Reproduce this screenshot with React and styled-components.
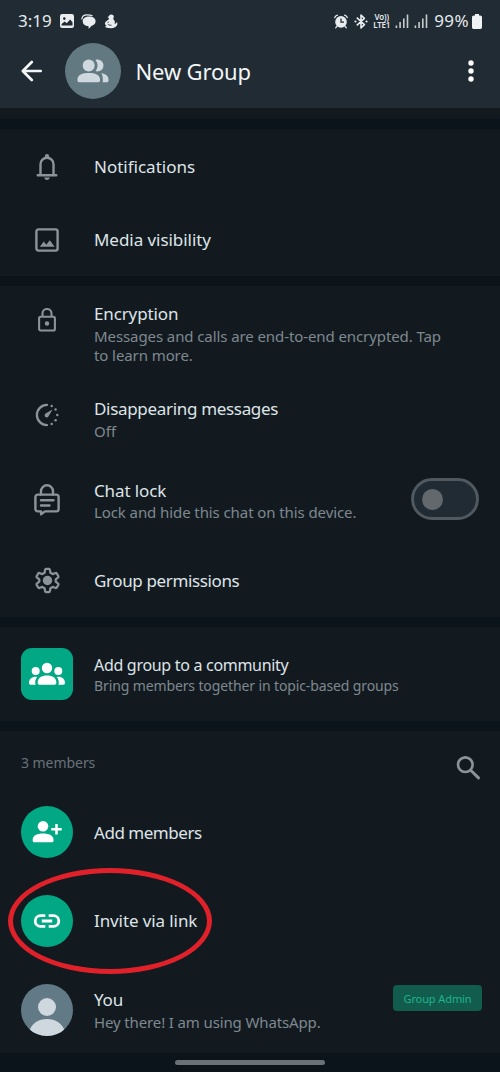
import React from 'react';
import styled, { createGlobalStyle } from 'styled-components';

const GlobalStyle = createGlobalStyle`
  * {
    box-sizing: border-box;
  }

  body {
    margin: 0;
    background-color: #0b141a;
    font-family: 'Noto Sans', 'Open Sans', sans-serif;
  }

  svg {
    display: block;
    flex: none;
  }
`

const Screen = styled.div`
  width: 500px;
  height: 1072px;
  display: flex;
  flex-direction: column;
  overflow: hidden;
  background-color: #0b141a;
`

const Header = styled.header`
  height: 108px;
  flex: none;
  background-color: #202b33;
`

const StatusBar = styled.div`
  height: 42px;
  padding: 0 18px;
  display: flex;
  align-items: center;
  justify-content: space-between;
  color: #e6eaec;

  .side {
    display: flex;
    align-items: center;
  }
`

const StatusText = styled.span`
  margin-left: ${props => props.$left || 0}px;
  font-size: 17px;
  line-height: 22px;
  letter-spacing: ${props => props.$spacing || 0}px;
  white-space: nowrap;
`

const Network = styled.div`
  margin-left: 4px;
  width: 19px;
  text-align: center;
  white-space: pre;
  font-size: 8px;
  font-weight: 600;
  line-height: 8px;
  letter-spacing: -0.2px;
`

const Toolbar = styled.div`
  height: 58px;
  padding: 0 19px 0 20px;
  display: flex;
  align-items: center;
  color: #f3f6f7;

  h1 {
    flex: 1;
    margin: 0 0 0 15px;
    font-size: 22px;
    font-weight: 400;
    line-height: 30px;
    letter-spacing: -0.15px;
  }
`

const Avatar = styled.div`
  width: ${props => props.$size}px;
  height: ${props => props.$size}px;
  flex: none;
  margin-left: ${props => props.$left || 0}px;
  display: flex;
  align-items: center;
  justify-content: center;
  overflow: hidden;
  border-radius: ${props => props.$radius || '50%'};
  background-color: ${props => props.$color || '#02a884'};
`

const Section = styled.section`
  height: ${props => props.$height}px;
  flex: none;
  margin-bottom: ${props => props.$gap ?? 10}px;
  background-color: #121a20;
`

const Row = styled.div`
  position: relative;
  height: ${props => props.$height}px;
  padding: ${props => props.$top || 0}px 18px 0 21px;
  display: flex;
  align-items: ${props => (props.$top ? 'flex-start' : 'center')};
`

const IconSlot = styled.div`
  width: 52px;
  flex: none;
  display: flex;
  justify-content: center;
  margin-top: ${props => props.$top || 0}px;
  color: #8b9499;
`

const Texts = styled.div`
  flex: 1;
  min-width: 0;
  margin-left: 21px;
  padding-top: ${props => props.$top || 0}px;
`

const Title = styled.div`
  font-size: ${props => props.$size || 17}px;
  line-height: 22px;
  letter-spacing: ${props => props.$spacing || 0}px;
  white-space: nowrap;
  color: #dfe4e8;
`

const Sub = styled.div`
  margin-top: ${props => props.$gap ?? 1}px;
  font-size: ${props => props.$size || 15}px;
  line-height: 19px;
  letter-spacing: ${props => props.$spacing || 0}px;
  white-space: pre;
  color: #7f888f;
`

const Switch = styled.div`
  width: 68px;
  height: 42px;
  flex: none;
  margin: -2px 3px 0 0;
  padding-left: 8px;
  display: flex;
  align-items: center;
  border: 3px solid #50595f;
  border-radius: 21px;
  background-color: #202b33;

  &::before {
    content: '';
    width: 21px;
    height: 21px;
    border-radius: 50%;
    background-color: #62686c;
  }
`

const MembersHead = styled.div`
  height: 57px;
  padding: 7px 19px 0 21px;
  display: flex;
  align-items: center;
  justify-content: space-between;
  color: #8b9499;

  span {
    font-size: 14px;
    line-height: 20px;
    letter-spacing: -0.05px;
    color: #69737a;
  }

  svg {
    margin-top: 9px;
  }
`

const Badge = styled.div`
  width: 89px;
  height: 26px;
  flex: none;
  align-self: flex-start;
  margin-top: 20px;
  border-radius: 4px;
  text-align: center;
  font-size: 11px;
  line-height: 27px;
  letter-spacing: -0.1px;
  white-space: nowrap;
  color: #20b38c;
  background-color: #115c4d;
`

const Highlight = styled.div`
  position: absolute;
  left: 8px;
  top: -8px;
  width: 204px;
  height: 106px;
  border: 5px solid #e0212a;
  border-radius: 50%;
`

const NavBar = styled.div`
  flex: 1;
  display: flex;
  justify-content: center;
  padding-top: 7px;

  &::before {
    content: '';
    width: 150px;
    height: 5px;
    border-radius: 3px;
    background-color: #6a7277;
  }
`

const PictureIcon = () => (
  <svg width="22" height="14" viewBox="-8 0 22 14">
    <rect width="14" height="14" rx="2.2" fill="#e9edef" />
    <circle cx="4.3" cy="4.6" r="1.3" fill="#202b33" />
    <path d="M1.6 11.6V10l3-2.6 2.2 1.8 3.3-3.6 2.4 2.6v3.4z" fill="#202b33" />
  </svg>
)

const ChatIcon = () => (
  <svg width="22" height="15" viewBox="-7 0 22 15">
    <path d="M.8 5.500C.9 2.500 2.800.9 6 .9c2.500 0 4 .2 5.500.9" fill="none" stroke="#e9edef" strokeWidth="1.200" />
    <path d="M8.300 2.600c3.700 0 6.300 1.800 6.300 4.600 0 2.500-1.800 4.100-4.300 4.700-.7 1.100-1.700 2.100-2.800 2.600l.1-2.300C4 12 1.700 10 1.700 7.200c0-2.800 2.700-4.600 6.600-4.600z" fill="#e9edef" />
  </svg>
)

const DuckIcon = () => (
  <svg width="22" height="15" viewBox="-8 0 22 15">
    <path d="M7.200.4c1.900 0 2.900 1.200 2.600 2.700-.2 1-.8 1.500-.4 2.200.5.900 1.500 1.300 1.500 2.900 0 .8-.2 1.400-.5 1.900.9-.2 1.800-1 2.600-2.100.6 1.200.500 2.700-.3 3.800-1.100 1.600-2.900 2.500-5.500 2.500-3.500 0-6-.6-6-1.700 0-.7.700-1 1.600-1.200C.9 10.800.6 9.600 1.200 8.400 2 6.900 3.700 6.400 4.800 5.200c.3-.4.2-.8-.1-1.100L3.300 3l1.500-.6C5 1.200 5.900.4 7.200.4z" fill="#e9edef" />
    <path d="M3.800 10c.9 1 2.100 1.400 3.700 1.200M3.600 8.200h1.200" fill="none" stroke="#202b33" strokeWidth=".9" />
  </svg>
)

const AlarmIcon = () => (
  <svg width="14" height="15" viewBox="0 0 14 15">
    <path d="M.7 3.700C1 2.400 2 1.500 3.400 1.100M13.300 3.700C13 2.400 12 1.500 10.600 1.100M3 12.200l-1.300 1.600M11 12.200l1.300 1.600" fill="none" stroke="#e9edef" strokeWidth="1.300" strokeLinecap="round" />
    <circle cx="7" cy="7.900" r="5.800" fill="#e9edef" />
    <path d="M7 4.500v3.700h3" fill="none" stroke="#202b33" strokeWidth="1.300" />
  </svg>
)

const BluetoothIcon = () => (
  <svg width="20" height="15" viewBox="-6 0 20 15">
    <path d="M2.800 3.700l7.600 7L7 13.900V1.100l3.400 3.200-7.600 7" fill="none" stroke="#e9edef" strokeWidth="1.600" strokeLinejoin="round" />
    <circle cx="1.500" cy="7.500" r="1.100" fill="#e9edef" />
    <circle cx="12.500" cy="7.500" r="1.100" fill="#e9edef" />
  </svg>
)

const SignalIcon = () => (
  <svg width="18.500" height="14" viewBox="-4.500 0 18.500 14">
    <path d="M.9 11.500V14M4.600 8v6M8.300 4.500V14M12 .500V14" stroke="#c6cbce" strokeWidth="1.600" />
  </svg>
)

const BatteryIcon = () => (
  <svg width="13" height="15" viewBox="-3 0 13 15">
    <path d="M3 0h4v1.500h1.200c1 0 1.800.8 1.800 1.800v9.900c0 1-.8 1.800-1.800 1.800H1.800C.8 15 0 14.200 0 13.200V3.300c0-1 .8-1.800 1.800-1.800H3z" fill="#f0f3f4" />
  </svg>
)

const BackIcon = () => (
  <svg width="24" height="22" viewBox="0 0 24 22" fill="none" stroke="currentColor" strokeWidth="2.700" strokeLinecap="round" strokeLinejoin="round">
    <path d="M11.800 2L2.800 11l9 9M3 11h17.700" />
  </svg>
)

const GroupIcon = () => (
  <svg width="32" height="24" viewBox="0 0 32 24" fill="#cfd8de">
    <circle cx="11.700" cy="6.500" r="6" />
    <path d="M.5 20.200c0-4.500 5-6.300 11.300-6.300S23 15.700 23 20.200v1.600c0 .9-.6 1.400-1.400 1.400H1.900c-.8 0-1.400-.5-1.400-1.400z" />
    <path d="M18.400.9c.7-.3 1.400-.4 2.100-.4a6 6 0 0 1 0 12c-.7 0-1.400-.1-2.100-.4 1.300-1.400 2.100-3.400 2.100-5.600S19.700 2.300 18.400.9z" />
    <path d="M24.300 14.300c4.300.7 7.200 2.500 7.200 5.900v1.600c0 .9-.6 1.400-1.400 1.400h-4.600c.2-.4.300-.9.300-1.400v-1.600c0-2.600-.5-4.300-1.500-5.900z" />
  </svg>
)

const MoreIcon = () => (
  <svg width="20" height="24" viewBox="0 0 20 24" fill="#fff">
    <circle cx="10" cy="4" r="2.700" />
    <circle cx="10" cy="12" r="2.700" />
    <circle cx="10" cy="20" r="2.700" />
  </svg>
)

const BellIcon = () => (
  <svg width="22" height="28" viewBox="0 0 22 28" fill="none" stroke="currentColor" strokeWidth="2.400">
    <path d="M1.700 22.200h18.600M4.500 22V11.200a6.500 6.500 0 0 1 13 0V22" strokeLinecap="round" />
    <path d="M8.900 4.500V3a2.100 2.100 0 0 1 4.200 0v1.500zM8.200 24.600h5.600c-.3 1.500-1.300 2.300-2.800 2.300s-2.500-.8-2.800-2.300z" fill="currentColor" stroke="none" />
  </svg>
)

const MediaIcon = () => (
  <svg width="24" height="24" viewBox="0 0 24 24">
    <rect x="1.400" y="1.400" width="21.200" height="21.200" rx="2" fill="none" stroke="currentColor" strokeWidth="2.400" />
    <path d="M4.800 18.700l4-5.200 2.500 3.200 3.500-4.500 4.800 6.500z" fill="currentColor" />
  </svg>
)

const LockIcon = () => (
  <svg width="20" height="24" viewBox="0 0 20 24" fill="none" stroke="currentColor" strokeWidth="2.100">
    <rect x="2.100" y="8.700" width="15.800" height="13.800" rx="1.500" />
    <path d="M5.500 8.700V5.500a4.500 4.500 0 0 1 9 0v3.200" />
    <circle cx="10" cy="15.500" r="2.200" fill="currentColor" stroke="none" />
  </svg>
)

const TimerIcon = () => (
  <svg width="24" height="24" viewBox="0 0 24 24">
    <path d="M12 1.900a10.100 10.100 0 0 0 0 20.200" fill="none" stroke="currentColor" strokeWidth="2.300" strokeLinecap="round" />
    <path d="M17.500 6.600l-3.800 6.500a2.100 2.100 0 1 1-3.100-2.500z" fill="currentColor" />
    <g fill="currentColor">
      <circle cx="16.700" cy="3" r="1.200" />
      <circle cx="20.600" cy="6.500" r="1.200" />
      <circle cx="22.300" cy="12" r="1.200" />
      <circle cx="20.600" cy="17.300" r="1.200" />
      <circle cx="16.700" cy="21" r="1.200" />
    </g>
  </svg>
)

const ChatLockIcon = () => (
  <svg width="26" height="32" viewBox="0 0 26 32" fill="none" stroke="currentColor" strokeWidth="2.400" strokeLinecap="round" strokeLinejoin="round">
    <path d="M3.800 10.600h18.400a2.400 2.400 0 0 1 2.400 2.400v12a2.400 2.400 0 0 1-2.400 2.400H11l-3.900 2.800v-2.800H3.800A2.400 2.400 0 0 1 1.400 25V13a2.400 2.400 0 0 1 2.400-2.400z" />
    <path d="M7 10.500V7.300a6 6 0 0 1 12 0v3.200M7 16.200h12.500M7 21.500h8.500" />
  </svg>
)

const GearIcon = () => (
  <svg width="27" height="27" viewBox="0 0 24 24">
    <path d="M10.600 1.700h2.800c.4 0 .6.300.7.700l.5 2.700 2 1.200 2.700-1c.4-.1.700 0 .9.400l1.500 2.500c.2.400.1.700-.2 1L19.300 11v2l2.200 1.800c.3.300.4.600.2 1l-1.500 2.500c-.2.400-.5.500-.9.400l-2.700-1-2 1.200-.5 2.700c-.1.400-.3.700-.7.700h-2.800c-.4 0-.6-.3-.7-.7l-.5-2.700-2-1.200-2.700 1c-.4.100-.7 0-.9-.4l-1.500-2.500c-.2-.4-.1-.7.200-1L4.700 13v-2L2.500 9.200c-.3-.3-.4-.6-.2-1l1.500-2.500c.2-.4.500-.5.900-.4l2.700 1 2-1.200.5-2.700c.1-.4.300-.7.700-.7z" fill="none" stroke="currentColor" strokeWidth="2" strokeLinejoin="round" />
    <circle cx="12" cy="12" r="4.200" fill="currentColor" />
  </svg>
)

const CommunityIcon = () => (
  <svg width="36" height="24" viewBox="0 0 36 24" fill="#fff">
    <circle cx="18" cy="6" r="5.200" />
    <circle cx="6.700" cy="9" r="4" />
    <circle cx="29.300" cy="9" r="4" />
    <path d="M8.700 20.500c0-4.600 3.800-7 9.300-7s9.300 2.400 9.300 7v.6c0 1-.7 1.700-1.700 1.700H10.400c-1 0-1.700-.7-1.700-1.700z" />
    <path d="M8.200 15.200c-1.300 1.400-2 3.200-2 5.300 0 .9.200 1.600.5 2.300H1.700C.7 22.800 0 22.100 0 21.100c0-4 2.700-6.400 6.700-6.400.5 0 1 .1 1.500.5zM27.800 15.200c1.300 1.400 2 3.200 2 5.300 0 .9-.2 1.600-.5 2.300h5c1 0 1.700-.7 1.700-1.700 0-4-2.700-6.400-6.700-6.400-.5 0-1 .1-1.500.5z" />
  </svg>
)

const AddMemberIcon = () => (
  <svg width="30" height="24" viewBox="0 0 30 24" fill="#fff">
    <circle cx="11" cy="6.300" r="5.300" />
    <path d="M.7 19.500c0-4 4.500-6 10.300-6s10.500 2 10.500 6v1.200c0 .9-.6 1.500-1.500 1.500H2.200c-.9 0-1.500-.6-1.500-1.500z" />
    <path d="M24.500 4v10.400M19.300 9.200h10.400" stroke="#fff" strokeWidth="2.500" />
  </svg>
)

const LinkIcon = () => (
  <svg width="28" height="16" viewBox="0 0 28 16" fill="none" stroke="#fff" strokeWidth="2.800">
    <path d="M12.300 2.700H7.500a5.300 5.300 0 0 0 0 10.600h4.800M15.700 2.700h4.800a5.300 5.300 0 0 1 0 10.600h-4.800M8.800 8h10.400" />
  </svg>
)

const SearchIcon = () => (
  <svg width="26" height="26" viewBox="0 0 26 26" fill="none" stroke="currentColor" strokeWidth="2.600" strokeLinecap="round">
    <circle cx="10.300" cy="9.700" r="7.300" />
    <path d="M15.700 15.200l7.800 7.700" strokeWidth="2.900" />
  </svg>
)

const PersonIcon = () => (
  <svg width="52" height="52" viewBox="0 0 52 52" fill="#cfd8de">
    <circle cx="26" cy="23" r="9" />
    <path d="M8 47.500C10.500 39.500 17.500 35 26 35s15.500 4.500 18 12.500V52H8z" />
  </svg>
)

function App() {
  return (
    <>
      <GlobalStyle />
      <Screen>
        <Header>
          <StatusBar>
            <div className="side">
              <StatusText>3:19</StatusText>
              <PictureIcon />
              <ChatIcon />
              <DuckIcon />
            </div>
            <div className="side">
              <AlarmIcon />
              <BluetoothIcon />
              <Network>{'Vo))\nLTE1'}</Network>
              <SignalIcon />
              <SignalIcon />
              <StatusText $left={6} $spacing={0.4}>99%</StatusText>
              <BatteryIcon />
            </div>
          </StatusBar>
          <Toolbar>
            <BackIcon />
            <Avatar $size={56} $color="#627982" $left={20.5}>
              <GroupIcon />
            </Avatar>
            <h1>New Group</h1>
            <MoreIcon />
          </Toolbar>
        </Header>

        <Section $height={11} />

        <Section $height={147}>
          <Row $height={75}>
            <IconSlot><BellIcon /></IconSlot>
            <Texts><Title>Notifications</Title></Texts>
          </Row>
          <Row $height={72}>
            <IconSlot><MediaIcon /></IconSlot>
            <Texts><Title $spacing={-0.05}>Media visibility</Title></Texts>
          </Row>
        </Section>

        <Section $height={331}>
          <Row $height={95} $top={17}>
            <IconSlot $top={5}><LockIcon /></IconSlot>
            <Texts>
              <Title $spacing={-0.13}>Encryption</Title>
              <Sub $gap={2} $spacing={-0.09}>{'Messages and calls are end-to-end encrypted. Tap\nto learn more.'}</Sub>
            </Texts>
          </Row>
          <Row $height={80} $top={17}>
            <IconSlot $top={5}><TimerIcon /></IconSlot>
            <Texts>
              <Title $spacing={-0.32}>Disappearing messages</Title>
              <Sub $gap={2}>Off</Sub>
            </Texts>
          </Row>
          <Row $height={83} $top={19}>
            <IconSlot $top={4}><ChatLockIcon /></IconSlot>
            <Texts>
              <Title $spacing={-0.12}>Chat lock</Title>
              <Sub $spacing={-0.09}>Lock and hide this chat on this device.</Sub>
            </Texts>
            <Switch />
          </Row>
          <Row $height={73}>
            <IconSlot><GearIcon /></IconSlot>
            <Texts><Title $spacing={-0.37}>Group permissions</Title></Texts>
          </Row>
        </Section>

        <Section $height={94}>
          <Row $height={94}>
            <Avatar $size={52} $radius="11px">
              <CommunityIcon />
            </Avatar>
            <Texts>
              <Title $size={16} $spacing={-0.3}>Add group to a community</Title>
              <Sub $gap={0} $size={14} $spacing={-0.12}>Bring members together in topic-based groups</Sub>
            </Texts>
          </Row>
        </Section>

        <Section $height={322} $gap={0}>
          <MembersHead>
            <span>3 members</span>
            <SearchIcon />
          </MembersHead>
          <Row $height={88}>
            <Avatar $size={52}><AddMemberIcon /></Avatar>
            <Texts $top={2}><Title $spacing={-0.47}>Add members</Title></Texts>
          </Row>
          <Row $height={89}>
            <Avatar $size={52}><LinkIcon /></Avatar>
            <Texts><Title $spacing={-0.1}>Invite via link</Title></Texts>
            <Highlight />
          </Row>
          <Row $height={90}>
            <Avatar $size={52} $color="#627986"><PersonIcon /></Avatar>
            <Texts>
              <Title $spacing={-0.2}>You</Title>
              <Sub $gap={2} $spacing={-0.13}>Hey there! I am using WhatsApp.</Sub>
            </Texts>
            <Badge>Group Admin</Badge>
          </Row>
        </Section>

        <NavBar />
      </Screen>
    </>
  )
}

export default App;
